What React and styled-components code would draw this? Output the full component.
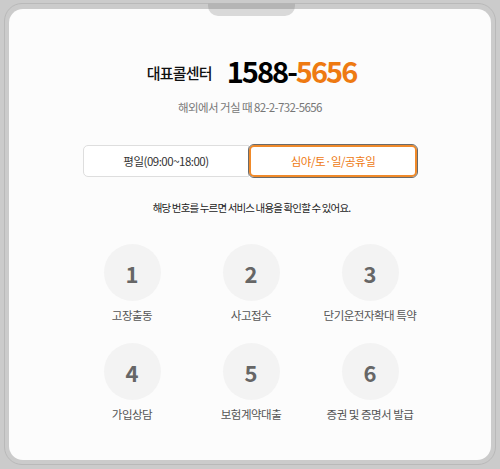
import React, { useState } from "react"
import styled, { createGlobalStyle } from "styled-components"

const Global = createGlobalStyle`
  html, body {
    margin: 0;
    padding: 0;
    background: #cbcbcb;
  }
  body {
    font-family: "Noto Sans CJK KR", "Noto Sans", sans-serif;
  }
`;

const Page = styled.div`
  position: relative;
  width: 500px;
  height: 469px;
  padding: 3px 4px 3px 4px;
  box-sizing: border-box;
`;

const Frame = styled.div`
  height: 462px;
  box-sizing: border-box;
  border: 1px solid #b9b9b9;
  border-radius: 18px;
  padding: 5px 4px 4px 4px;
`;

const Notch = styled.div`
  position: absolute;
  top: 3px;
  left: 208px;
  width: 87px;
  height: 13px;
  background: linear-gradient(#b5b5b5 0, #b5b5b5 6px, #d9d9d9 6px);
  border-radius: 0 0 10px 10px;
`;

const Card = styled.div`
  height: 100%;
  background: #fcfcfc;
  border-radius: 14px;
  display: flex;
  flex-direction: column;
  align-items: center;
  padding-top: 43px;
  box-sizing: border-box;
`;

const HeadRow = styled.div`
  display: flex;
  align-items: center;
  gap: 15px;
  height: 36px;
  margin-left: 3px;
`;

const HeadLabel = styled.div`
  font-size: 15px;
  font-weight: 500;
  color: #111;
  letter-spacing: -0.8px;
  padding-top: 4px;
`;

const Number = styled.div`
  font-size: 29px;
  font-weight: 700;
  color: #000;
  letter-spacing: -2px;
  line-height: 36px;
`;

const Accent = styled.span`
  color: #ee7a12;
`;

const Sub = styled.div`
  margin-top: 10px;
  font-size: 11.5px;
  line-height: 18px;
  color: #777;
  letter-spacing: -0.6px;
`;

const Tabs = styled.div`
  margin-top: 29px;
  display: flex;
  width: 334px;
`;

const Tab = styled.button`
  flex: 1;
  height: 32px;
  box-sizing: border-box;
  font-family: inherit;
  font-size: 11.5px;
  letter-spacing: -0.5px;
  cursor: pointer;
  background: #fff;
  color: ${({ active }) => (active ? "#ee7a12" : "#333")};
  border: ${({ active }) => (active ? "2px solid #f08a2a" : "1px solid #dedede")};
  border-radius: ${({ side }) => (side === "left" ? "5px 0 0 5px" : "5px")};
  outline: ${({ active }) => (active ? "1px solid #6a6a6a" : "none")};
  outline-offset: 0;
  padding: 0;
`;

const Info = styled.div`
  margin-top: 23px;
  font-size: 10.5px;
  line-height: 16px;
  color: #222;
  letter-spacing: -0.85px;
  margin-left: 3px;
`;

const Grid = styled.div`
  margin-top: 28px;
  margin-left: 2px;
  display: grid;
  grid-template-columns: repeat(3, 119px);
  row-gap: 20px;
`;

const Item = styled.div`
  display: flex;
  flex-direction: column;
  align-items: center;
  cursor: pointer;
`;

const Circle = styled.div`
  width: 57px;
  height: 57px;
  border-radius: 50%;
  background: #f3f3f3;
  display: flex;
  align-items: center;
  justify-content: center;
  font-size: 22px;
  font-weight: 700;
  color: #666;
`;

const Label = styled.div`
  margin-top: 6px;
  font-size: 11.5px;
  line-height: 16px;
  color: #555;
  letter-spacing: -0.5px;
  white-space: nowrap;
`;

const services = [
  "고장출동",
  "사고접수",
  "단기운전자확대 특약",
  "가입상담",
  "보험계약대출",
  "증권 및 증명서 발급",
];

export default function App() {
  const [tab, setTab] = useState(1);

  return (
    <>
      <Global />
      <Page>
        <Notch />
        <Frame>
          <Card>
            <HeadRow>
              <HeadLabel>대표콜센터</HeadLabel>
              <Number>1588-<Accent>5656</Accent></Number>
            </HeadRow>
            <Sub>해외에서 거실 때 82-2-732-5656</Sub>
            <Tabs>
              <Tab side="left" active={tab === 0} onClick={() => setTab(0)}>평일(09:00~18:00)</Tab>
              <Tab side="right" active={tab === 1} onClick={() => setTab(1)}>심야/토·일/공휴일</Tab>
            </Tabs>
            <Info>해당 번호를 누르면 서비스 내용을 확인할 수 있어요.</Info>
            <Grid>
              {services.map((name, i) => (
                <Item key={name}>
                  <Circle>{i + 1}</Circle>
                  <Label>{name}</Label>
                </Item>
              ))}
            </Grid>
          </Card>
        </Frame>
      </Page>
    </>
  )
}
